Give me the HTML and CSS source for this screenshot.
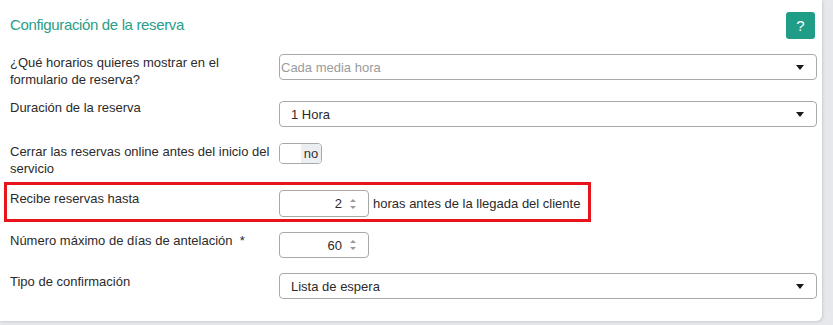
FILE: index.html
```html
<!DOCTYPE html>
<html lang="es">
<head>
<meta charset="utf-8">
<title>Configuración de la reserva</title>
<link rel="stylesheet" href="styles.css">
</head>
<body>
<div class="card">
  <div class="header">
    <h2 class="title">Configuración de la reserva</h2>
    <button class="help" type="button">?</button>
  </div>

  <div class="row">
    <div class="label">¿Qué horarios quieres mostrar en el formulario de reserva?</div>
    <div class="control">
      <div class="select placeholder"><span>Cada media hora</span><i class="caret"></i></div>
    </div>
  </div>

  <div class="row">
    <div class="label up">Duración de la reserva</div>
    <div class="control">
      <div class="select"><span class="val">1 Hora</span><i class="caret"></i></div>
    </div>
  </div>

  <div class="row">
    <div class="label">Cerrar las reservas online antes del inicio del servicio</div>
    <div class="control">
      <div class="toggle"><span class="off"></span><span class="no">no</span></div>
    </div>
  </div>

  <div class="row highlighted">
    <div class="label">Recibe reservas hasta</div>
    <div class="control inline">
      <div class="number tall"><span>2</span>
        <svg class="spin" width="8" height="14" viewBox="0 0 8 14"><path d="M1 5 L4 2 L7 5 Z" fill="#9a9a9a"/><path d="M1 9 L4 12 L7 9 Z" fill="#9a9a9a"/></svg>
      </div>
      <span class="suffix">horas antes de la llegada del cliente</span>
    </div>
    <div class="mark"></div>
  </div>

  <div class="row short">
    <div class="label">Número máximo de días de antelación &nbsp;*</div>
    <div class="control">
      <div class="number"><span>60</span>
        <svg class="spin" width="8" height="14" viewBox="0 0 8 14"><path d="M1 5 L4 2 L7 5 Z" fill="#9a9a9a"/><path d="M1 9 L4 12 L7 9 Z" fill="#9a9a9a"/></svg>
      </div>
    </div>
  </div>

  <div class="row">
    <div class="label">Tipo de confirmación</div>
    <div class="control">
      <div class="select"><span class="val">Lista de espera</span><i class="caret"></i></div>
    </div>
  </div>
</div>
</body>
</html>
```

FILE: styles.css
```css
* { box-sizing: border-box; }
html, body { margin: 0; padding: 0; }
body {
  background: #e6e8ec;
  font-family: "Liberation Sans", Arial, sans-serif;
  font-size: 13px;
  color: #2b2b2b;
  width: 833px;
  height: 325px;
  overflow: hidden;
}
.card {
  width: 822px;
  height: 321px;
  background: #fff;
  border-radius: 0 0 6px 0;
  box-shadow: 1px 1px 3px rgba(0,0,0,0.12);
  padding: 12px 5px 0 10px;
}
.header {
  display: flex;
  justify-content: space-between;
  align-items: center;
  height: 27px;
  margin-bottom: 15px;
  padding-right: 2px;
}
.title {
  margin: 0;
  font-weight: normal;
  font-size: 15px;
  letter-spacing: -0.35px;
  color: #2a9d8a;
  position: relative;
  top: -1px;
}
.help {
  width: 29px;
  height: 27px;
  border: 0;
  border-radius: 3px;
  background: #1f9d86;
  color: #fff;
  font-family: "Liberation Sans", Arial, sans-serif;
  font-size: 15px;
  padding: 0;
}
.row {
  display: grid;
  grid-template-columns: 269px 1fr;
  margin-bottom: 13px;
  position: relative;
}
.row.short { margin-bottom: 12px; }
.label {
  line-height: 17px;
  padding-right: 8px;
}
.label.up { margin-top: -2px; }
.control {
  min-height: 29px;
}
.control.inline {
  display: flex;
  align-items: flex-start;
  gap: 4px;
}
.select {
  height: 26px;
  border: 1px solid #a9a9a9;
  border-radius: 4px;
  display: flex;
  align-items: center;
  justify-content: space-between;
  padding: 0 12px 0 11px;
  background: #fff;
}
.select.placeholder { padding-left: 1px; color: #9b9b9b; }
.caret {
  width: 0;
  height: 0;
  border-left: 4px solid transparent;
  border-right: 4px solid transparent;
  border-top: 5px solid #1a1a1a;
}
.toggle {
  width: 43px;
  height: 21px;
  border: 1px solid #a9a9a9;
  border-radius: 4px;
  display: flex;
  overflow: hidden;
}
.toggle .off { width: 21px; background: #fff; }
.toggle .no {
  flex: 1;
  background: #eceff2;
  display: flex;
  align-items: center;
  justify-content: center;
  color: #333;
}
.number {
  width: 90px;
  height: 26px;
  border: 1px solid #a9a9a9;
  border-radius: 4px;
  display: flex;
  align-items: center;
  justify-content: flex-end;
  gap: 7px;
  padding-right: 11px;
  font-size: 13px;
}
.number.tall { height: 27px; }
.spin { display: block; }
.suffix {
  line-height: 27px;
}
.mark {
  position: absolute;
  left: -6px;
  top: -8px;
  width: 587px;
  height: 40px;
  border: 3px solid #e8141b;
  pointer-events: none;
}
```
